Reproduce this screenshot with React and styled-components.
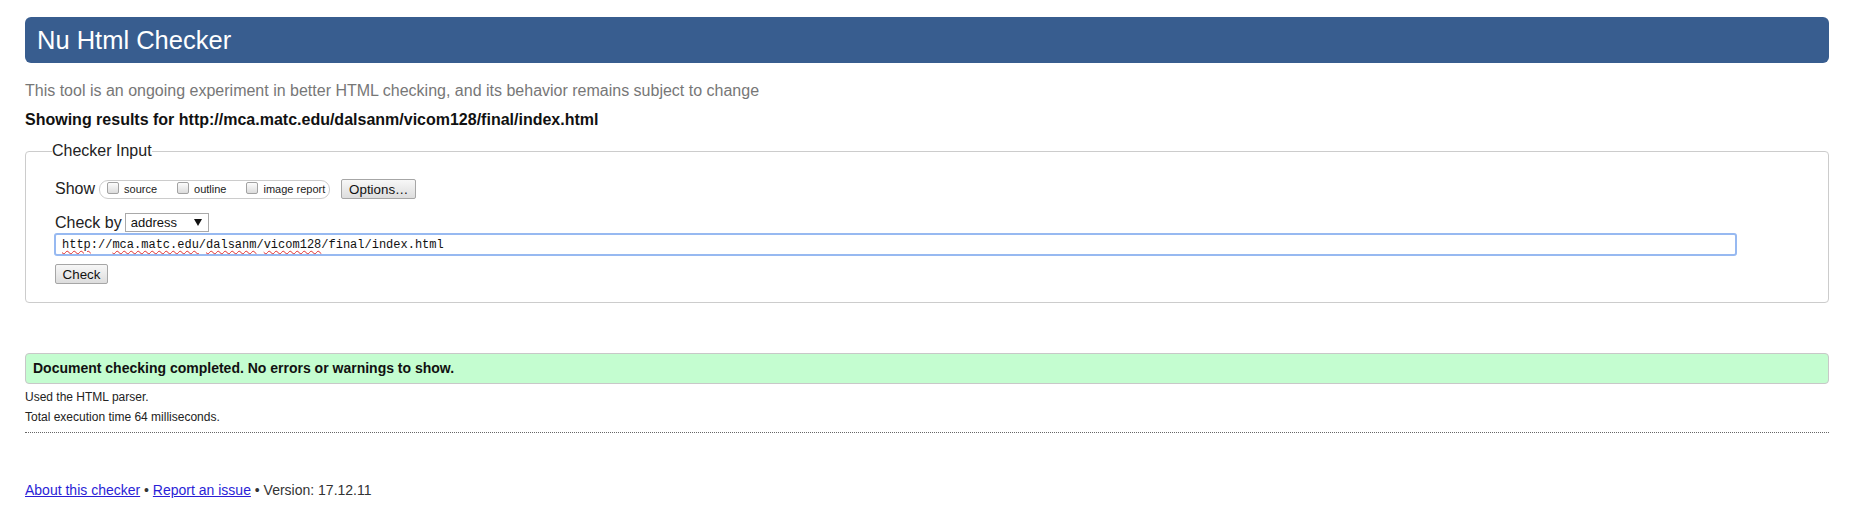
import React from 'react';
import styled, { createGlobalStyle } from 'styled-components';

const GlobalStyle = createGlobalStyle`
  html, body {
    margin: 0;
    padding: 0;
    background: #fff;
  }
  body {
    font-family: "Liberation Sans", Arial, sans-serif;
    color: #111;
  }
`;

const Page = styled.div`
  padding: 17px 35px 0 25px;
`;

const Banner = styled.h1`
  margin: 0;
  height: 46px;
  padding: 0 12px;
  border-radius: 6px;
  background: #385d8f;
  color: #fff;
  font-size: 25.5px;
  font-weight: normal;
  line-height: 46px;
`;

const Intro = styled.p`
  margin: 19px 0 0;
  font-size: 16px;
  line-height: 18px;
  color: #777;
`;

const ResultsFor = styled.p`
  margin: 11px 0 0;
  font-size: 16px;
  font-weight: bold;
  line-height: 18px;
  color: #111;
`;

const InputSet = styled.fieldset`
  margin: 13px 0 0;
  padding: 19px 0 18px 29px;
  border: 1px solid #ccc;
  border-radius: 4px;
  min-width: 0;
`;

const Legend = styled.legend`
  margin-left: -3px;
  padding: 0;
  font-size: 16px;
  line-height: 18px;
  color: #222;
`;

const Row = styled.div`
  display: flex;
  align-items: center;
  height: ${(p) => p.$h}px;
  margin-top: ${(p) => p.$gap || 0}px;
`;

const RowLabel = styled.span`
  font-size: 16px;
  line-height: 18px;
  color: #222;
  margin-right: ${(p) => p.$space}px;
`;

const ShowGroup = styled.div`
  display: inline-flex;
  align-items: center;
  box-sizing: border-box;
  height: 19px;
  padding: 0 4px 0 7px;
  border: 1px solid #ccc;
  border-radius: 9px;
`;

const ShowItem = styled.label`
  display: inline-flex;
  align-items: center;
  margin-right: ${(p) => (p.$last ? 0 : 20)}px;
  font-size: 11px;
  color: #222;
`;

const Box = styled.input`
  appearance: none;
  box-sizing: border-box;
  width: 12px;
  height: 12px;
  margin: -3px 5px 0 0;
  border: 1px solid #a2a2a2;
  border-radius: 2px;
  background: linear-gradient(#fcfcfc, #dcdcdc);
`;

const GreyButton = styled.button`
  box-sizing: border-box;
  width: ${(p) => p.$w}px;
  height: 20px;
  margin-left: ${(p) => p.$left || 0}px;
  padding: 0;
  border: 1px solid #a6a6a6;
  border-radius: 2px;
  background: linear-gradient(#f7f7f7, #dddddd);
  font-family: "Liberation Sans", Arial, sans-serif;
  font-size: 13.33px;
  color: #111;
`;

const SelectBox = styled.div`
  box-sizing: border-box;
  display: flex;
  align-items: center;
  justify-content: space-between;
  width: 84px;
  height: 19px;
  padding: 0 6px 0 5px;
  border: 1px solid #a9a9a9;
  background: #fff;
  font-size: 13px;
  color: #111;
`;

const UrlField = styled.div`
  box-sizing: border-box;
  display: flex;
  align-items: center;
  width: 1683px;
  height: 23px;
  margin-left: -1px;
  padding: 0 6px;
  border: 2px solid #97b9f1;
  border-radius: 3px;
  font-family: "Liberation Mono", "Courier New", monospace;
  font-size: 12px;
  color: #111;
  white-space: pre;
`;

const Misspelt = styled.span`
  text-decoration: underline wavy #e03030;
  text-decoration-thickness: 1px;
  text-underline-offset: 2px;
`;

const Success = styled.div`
  margin-top: 50px;
  height: 29px;
  padding-left: 7px;
  border: 1px solid #c8c8c8;
  border-radius: 4px;
  background: #c4fdd0;
  font-size: 14px;
  font-weight: bold;
  line-height: 29px;
  color: #111;
`;

const Details = styled.div`
  margin-top: 3px;
  font-size: 12px;
  line-height: 20px;
  color: #222;
`;

const Rule = styled.hr`
  margin: 5px 0 0;
  border: 0;
  border-top: 1px dotted #666;
  height: 0;
`;

const Footer = styled.p`
  margin: 49px 0 0;
  font-size: 14px;
  line-height: 16px;
  color: #333;
`;

const FootLink = styled.a`
  color: #2a1ed6;
  text-decoration: underline;
`;

function Arrow() {
  return (
    <svg width="8" height="7" viewBox="0 0 8 7" aria-hidden="true">
      <path d="M0 0 H8 L4 7 Z" fill="#111" />
    </svg>
  );
}

const showOptions = ['source', 'outline', 'image report'];

export default function App() {
  return (
    <Page>
      <GlobalStyle />
      <Banner>Nu Html Checker</Banner>
      <Intro>
        This tool is an ongoing experiment in better HTML checking, and its behavior remains subject to change
      </Intro>
      <ResultsFor>Showing results for http://mca.matc.edu/dalsanm/vicom128/final/index.html</ResultsFor>

      <InputSet>
        <Legend>Checker Input</Legend>
        <Row $h={20}>
          <RowLabel $space={4}>Show</RowLabel>
          <ShowGroup>
            {showOptions.map((name, i) => (
              <ShowItem key={name} $last={i === showOptions.length - 1}>
                <Box type="checkbox" />
                {name}
              </ShowItem>
            ))}
          </ShowGroup>
          <GreyButton type="button" $w={75} $left={11}>Options…</GreyButton>
        </Row>
        <Row $h={19} $gap={14}>
          <RowLabel $space={3}>Check by</RowLabel>
          <SelectBox>
            address
            <Arrow />
          </SelectBox>
        </Row>
        <Row $h={23} $gap={1}>
          <UrlField>
            <Misspelt>http</Misspelt>://<Misspelt>mca.matc.edu</Misspelt>/<Misspelt>dalsanm</Misspelt>/<Misspelt>vicom128</Misspelt>/final/index.html
          </UrlField>
        </Row>
        <Row $h={20} $gap={8}>
          <GreyButton type="button" $w={53}>Check</GreyButton>
        </Row>
      </InputSet>

      <Success>Document checking completed. No errors or warnings to show.</Success>
      <Details>
        <div>Used the HTML parser.</div>
        <div>Total execution time 64 milliseconds.</div>
      </Details>
      <Rule />
      <Footer>
        <FootLink href="#about">About this checker</FootLink>
        {' • '}
        <FootLink href="#issue">Report an issue</FootLink>
        {' • Version: 17.12.11'}
      </Footer>
    </Page>
  );
}
